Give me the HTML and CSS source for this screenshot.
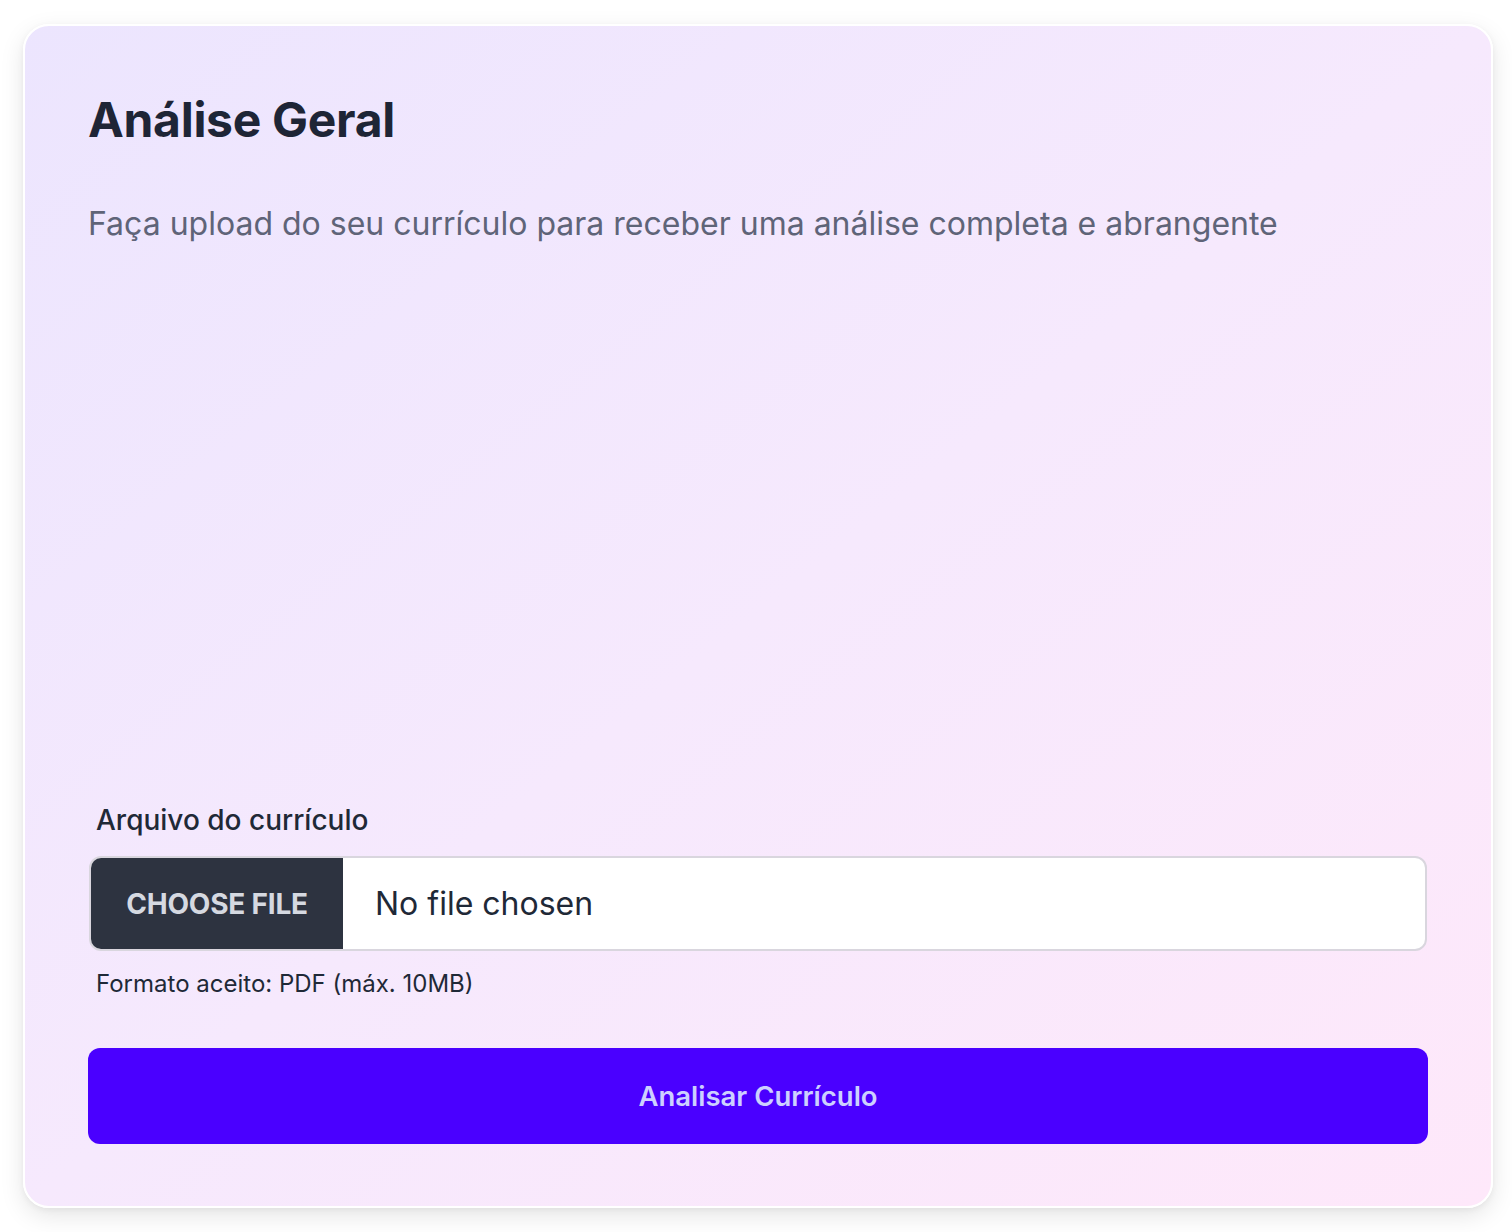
FILE: index.html
```html
<!DOCTYPE html>
<html lang="pt-BR">
<head>
<meta charset="utf-8">
<title>Análise Geral</title>
<link rel="stylesheet" href="styles.css">
</head>
<body>
<main class="page">
  <section class="card">
    <header class="card-head">
      <h1 class="title">Análise Geral</h1>
      <p class="subtitle">Faça upload do seu currículo para receber uma análise completa e abrangente</p>
    </header>
    <form class="upload-form">
      <label class="field-label" for="cv">Arquivo do currículo</label>
      <label class="file-box" for="cv">
        <input class="file-input" id="cv" type="file" accept="application/pdf">
        <span class="file-btn">CHOOSE FILE</span>
        <span class="file-name">No file chosen</span>
      </label>
      <p class="help">Formato aceito: PDF (máx. 10MB)</p>
      <button class="submit" type="button">Analisar Currículo</button>
    </form>
  </section>
</main>
</body>
</html>
```

FILE: styles.css
```css
* { box-sizing: border-box; }
html, body { margin: 0; padding: 0; background: #ffffff; }
body {
  font-family: Inter, "Noto Sans", "Liberation Sans", sans-serif;
  color: #1f2937;
}
.page {
  height: 1232px;
  padding: 24px 19px 24px 23px;
  display: flex;
}
.card {
  flex: 1;
  display: flex;
  flex-direction: column;
  border: 2px solid #ffffff;
  border-radius: 26px;
  padding: 64px 64px 62px 64px;
  background: linear-gradient(to bottom right, #ece5fe 0%, #f6e9fd 50%, #fee8fa 100%);
  box-shadow: 0 8px 24px rgba(0, 0, 0, 0.10), 0 2px 6px rgba(0, 0, 0, 0.05);
}
.title {
  margin: 0 0 0 -1px;
  font-size: 48px;
  line-height: 60px;
  font-weight: 700;
  letter-spacing: -0.3px;
  color: #1e2536;
}
.subtitle {
  margin: 50px 0 0 -1px;
  font-size: 32px;
  line-height: 48px;
  color: #5f6478;
}
.upload-form {
  margin-top: auto;
  display: flex;
  flex-direction: column;
}
.field-label {
  padding-left: 7px;
  font-size: 28px;
  line-height: 36px;
  font-weight: 500;
  color: #1f2937;
}
.file-box {
  margin-top: 18px;
  height: 95px;
  display: flex;
  align-items: stretch;
  background: #ffffff;
  border: 2px solid #d9d6de;
  border-radius: 12px;
  overflow: hidden;
  cursor: pointer;
}
.file-input { display: none; }
.file-btn {
  width: 252px;
  display: flex;
  align-items: center;
  justify-content: center;
  background: #2d3340;
  color: #d5d9e1;
  font-size: 28px;
  font-weight: 700;
  letter-spacing: -0.2px;
}
.file-name {
  display: flex;
  align-items: center;
  padding-left: 32px;
  font-size: 32px;
  color: #1f2937;
}
.help {
  margin: 16px 0 0;
  padding-left: 7px;
  font-size: 24px;
  line-height: 33px;
  color: #1f2937;
}
.submit {
  margin: 48px -1px 0;
  height: 96px;
  border: 0;
  border-radius: 12px;
  background: #4a00ff;
  color: #cdd0ff;
  font-family: inherit;
  font-size: 27.5px;
  font-weight: 600;
  cursor: pointer;
}
```
